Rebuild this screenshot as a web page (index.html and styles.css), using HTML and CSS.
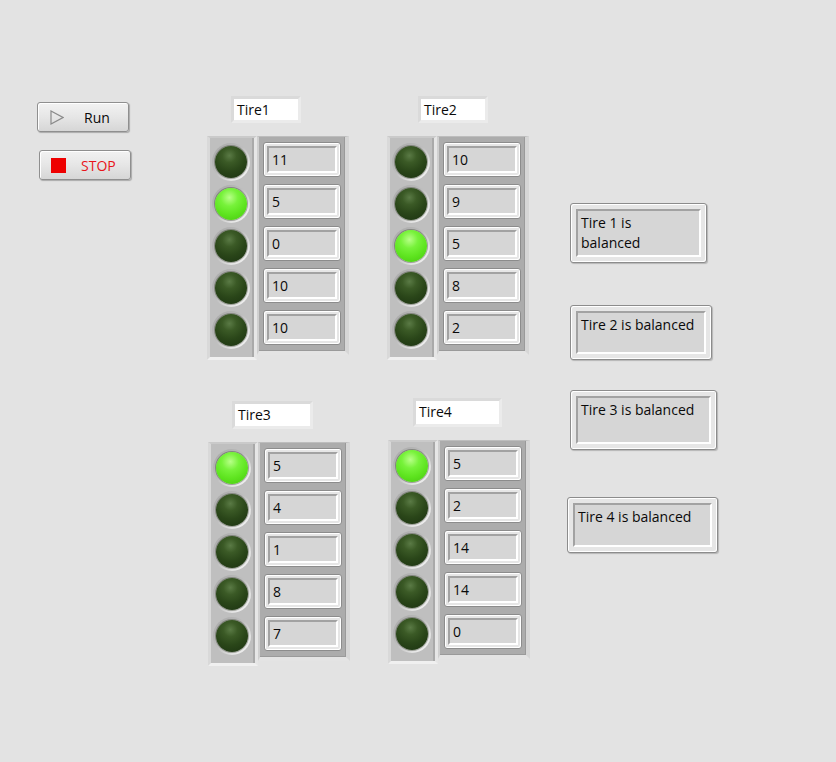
FILE: index.html
```html
<!DOCTYPE html>
<html>
<head>
<meta charset="utf-8">
<link rel="stylesheet" href="styles.css">
</head>
<body>
<div class="panel">
  <button class="btn btn-run"><svg class="play" width="14" height="15" viewBox="0 0 14 15"><path d="M1 1 L13 7.5 L1 14 Z" fill="none" stroke="#8a8a8a" stroke-width="1.2"/></svg><span>Run</span></button>
  <button class="btn btn-stop"><span class="stopsq"></span><span>STOP</span></button>

  <div class="tire t1">
    <div class="label l1">Tire1</div>
    <div class="arrays">
      <div class="ledframe">
        <div class="cell"><div class="bezel"><div class="led"></div></div></div>
        <div class="cell"><div class="bezel"><div class="led on"></div></div></div>
        <div class="cell"><div class="bezel"><div class="led"></div></div></div>
        <div class="cell"><div class="bezel"><div class="led"></div></div></div>
        <div class="cell"><div class="bezel"><div class="led"></div></div></div>
      </div>
      <div class="numframe">
        <div class="num"><div class="inset">11</div></div>
        <div class="num"><div class="inset">5</div></div>
        <div class="num"><div class="inset">0</div></div>
        <div class="num"><div class="inset">10</div></div>
        <div class="num"><div class="inset">10</div></div>
      </div>
    </div>
  </div>

  <div class="tire t2">
    <div class="label l2">Tire2</div>
    <div class="arrays">
      <div class="ledframe">
        <div class="cell"><div class="bezel"><div class="led"></div></div></div>
        <div class="cell"><div class="bezel"><div class="led"></div></div></div>
        <div class="cell"><div class="bezel"><div class="led on"></div></div></div>
        <div class="cell"><div class="bezel"><div class="led"></div></div></div>
        <div class="cell"><div class="bezel"><div class="led"></div></div></div>
      </div>
      <div class="numframe">
        <div class="num"><div class="inset">10</div></div>
        <div class="num"><div class="inset">9</div></div>
        <div class="num"><div class="inset">5</div></div>
        <div class="num"><div class="inset">8</div></div>
        <div class="num"><div class="inset">2</div></div>
      </div>
    </div>
  </div>

  <div class="tire t3">
    <div class="label l3">Tire3</div>
    <div class="arrays">
      <div class="ledframe">
        <div class="cell"><div class="bezel"><div class="led on"></div></div></div>
        <div class="cell"><div class="bezel"><div class="led"></div></div></div>
        <div class="cell"><div class="bezel"><div class="led"></div></div></div>
        <div class="cell"><div class="bezel"><div class="led"></div></div></div>
        <div class="cell"><div class="bezel"><div class="led"></div></div></div>
      </div>
      <div class="numframe">
        <div class="num"><div class="inset">5</div></div>
        <div class="num"><div class="inset">4</div></div>
        <div class="num"><div class="inset">1</div></div>
        <div class="num"><div class="inset">8</div></div>
        <div class="num"><div class="inset">7</div></div>
      </div>
    </div>
  </div>

  <div class="tire t4">
    <div class="label l4">Tire4</div>
    <div class="arrays">
      <div class="ledframe">
        <div class="cell"><div class="bezel"><div class="led on"></div></div></div>
        <div class="cell"><div class="bezel"><div class="led"></div></div></div>
        <div class="cell"><div class="bezel"><div class="led"></div></div></div>
        <div class="cell"><div class="bezel"><div class="led"></div></div></div>
        <div class="cell"><div class="bezel"><div class="led"></div></div></div>
      </div>
      <div class="numframe">
        <div class="num"><div class="inset">5</div></div>
        <div class="num"><div class="inset">2</div></div>
        <div class="num"><div class="inset">14</div></div>
        <div class="num"><div class="inset">14</div></div>
        <div class="num"><div class="inset">0</div></div>
      </div>
    </div>
  </div>

  <div class="ind i1"><div class="ind-in">Tire 1 is balanced</div></div>
  <div class="ind i2"><div class="ind-in">Tire 2 is balanced</div></div>
  <div class="ind i3"><div class="ind-in">Tire 3 is balanced</div></div>
  <div class="ind i4"><div class="ind-in">Tire 4 is balanced</div></div>
</div>
</body>
</html>
```

FILE: styles.css
```css
html, body {
  margin: 0;
  padding: 0;
  background: #e3e3e3;
}
.panel {
  position: relative;
  width: 836px;
  height: 762px;
  background: #e3e3e3;
  font-family: "Open Sans", "Noto Sans", sans-serif;
  font-size: 14px;
  color: #0a0a0a;
  overflow: hidden;
}

/* Buttons */
.btn {
  position: absolute;
  box-sizing: border-box;
  height: 30px;
  border: 1px solid #8f8f8f;
  border-radius: 3px;
  background: linear-gradient(#f2f2f2 0%, #e6e6e6 50%, #d6d6d6 100%);
  box-shadow: inset 1px 1px 0 #ffffff, 1px 1px 1px rgba(0,0,0,0.25);
  font-family: "Open Sans", "Noto Sans", sans-serif;
  font-size: 14px;
  display: flex;
  align-items: center;
  padding: 0;
}
.btn-run {
  left: 37px;
  top: 102px;
  width: 92px;
  color: #0a0a0a;
}
.btn-run .play {
  margin-left: 12px;
}
.btn-run span {
  margin-left: 20px;
}
.btn-stop {
  left: 39px;
  top: 150px;
  width: 92px;
  color: #e8141a;
}
.stopsq {
  width: 15px;
  height: 15px;
  background: #ee0000;
  margin-left: 11px;
}
.btn-stop span:last-child {
  margin-left: 15px;
}

/* Tire groups */
.tire {
  position: absolute;
  display: flex;
  flex-direction: column;
}
.t1 { left: 207px; top: 96px; }
.t2 { left: 387px; top: 96px; }
.t3 { left: 208px; top: 401px; }
.t4 { left: 388px; top: 398px; }

.label {
  box-sizing: border-box;
  height: 27px;
  background: #ffffff;
  border: 3px solid #ebebeb;
  border-top-color: #dadada;
  border-left-color: #dadada;
  padding-left: 3px;
  line-height: 21px;
  font-size: 14px;
}
.l1 { margin-left: 24px; width: 70px; margin-bottom: 13px; }
.l2 { margin-left: 31px; width: 70px; margin-bottom: 13px; }
.l3 { margin-left: 24px; width: 81px; height: 28px; margin-bottom: 13px; }
.l4 { margin-left: 25px; width: 89px; height: 29px; margin-bottom: 13px; }

.arrays {
  display: flex;
  align-items: flex-start;
}

.ledframe {
  box-sizing: border-box;
  width: 50px;
  display: flex;
  flex-direction: column;
  gap: 7px;
  padding: 6px 0 10px 2px;
  background: #bfbfbf;
  border-left: 3px solid #d9d9d9;
  border-top: 2px solid #cacaca;
  border-right: 3px solid #e6e6e6;
  border-bottom: 3px solid #f0f0f0;
  box-shadow: inset -2px 0 0 #a9a9a9;
}
.cell {
  height: 35px;
  display: flex;
  align-items: center;
}
.bezel {
  width: 38px;
  height: 38px;
  border-radius: 50%;
  background: linear-gradient(135deg, #a6a6a6 0%, #bdbdbd 45%, #e9e9e9 80%, #f4f4f4 100%);
  display: flex;
  align-items: center;
  justify-content: center;
}
.led {
  width: 32px;
  height: 32px;
  border-radius: 50%;
  background: radial-gradient(circle at 45% 30%, #5a7a45 0%, #3b5a26 25%, #2a4619 55%, #1a3010 100%);
  box-shadow: 0 0 0 1px rgba(40,50,30,0.35);
}
.led.on {
  background: radial-gradient(circle at 45% 30%, #b8ff88 0%, #77f23a 30%, #5ee41f 60%, #46c410 100%);
}

.numframe {
  box-sizing: border-box;
  width: 92px;
  display: flex;
  flex-direction: column;
  gap: 7px;
  padding: 5px 0 6px 4px;
  background: #acacac;
  border-left: 2px solid #cfcfcf;
  border-top: 1px solid #bdbdbd;
  border-right: 4px solid #d6d6d6;
  border-bottom: 4px solid #e4e4e4;
  box-shadow: inset -1px -1px 0 #9a9a9a;
}
.num {
  box-sizing: border-box;
  width: 78px;
  height: 35px;
  border-radius: 3px;
  background: #e6e6e6;
  border: 1px solid #8c8c8c;
  box-shadow: inset 1px 1px 0 #ffffff, inset -1px -1px 0 #ffffff;
  padding: 3px;
  display: flex;
}
.inset {
  box-sizing: border-box;
  flex: 1;
  background: #d6d6d6;
  border: 2px solid #a2a2a2;
  border-right-color: #ffffff;
  border-bottom-color: #ffffff;
  padding-left: 3px;
  line-height: 23px;
  font-size: 14px;
}

/* Indicators */
.ind {
  position: absolute;
  box-sizing: border-box;
  border-radius: 3px;
  background: #e6e6e6;
  border: 1px solid #8c8c8c;
  box-shadow: inset 1px 1px 0 #ffffff, inset -1px -1px 0 #ffffff, 1px 1px 1px rgba(0,0,0,0.2);
  padding: 5px;
  display: flex;
}
.ind-in {
  box-sizing: border-box;
  flex: 1;
  background: #d6d6d6;
  border: 2px solid #a2a2a2;
  border-right-color: #ffffff;
  border-bottom-color: #ffffff;
  padding: 2px 4px 0 3px;
  line-height: 20px;
  font-size: 14px;
}
.i1 { left: 570px; top: 203px; width: 137px; height: 60px; }
.i1 .ind-in { padding-right: 40px; }
.i2 { left: 570px; top: 305px; width: 142px; height: 55px; }
.i3 { left: 570px; top: 390px; width: 147px; height: 60px; }
.i4 { left: 567px; top: 497px; width: 151px; height: 56px; }
```
